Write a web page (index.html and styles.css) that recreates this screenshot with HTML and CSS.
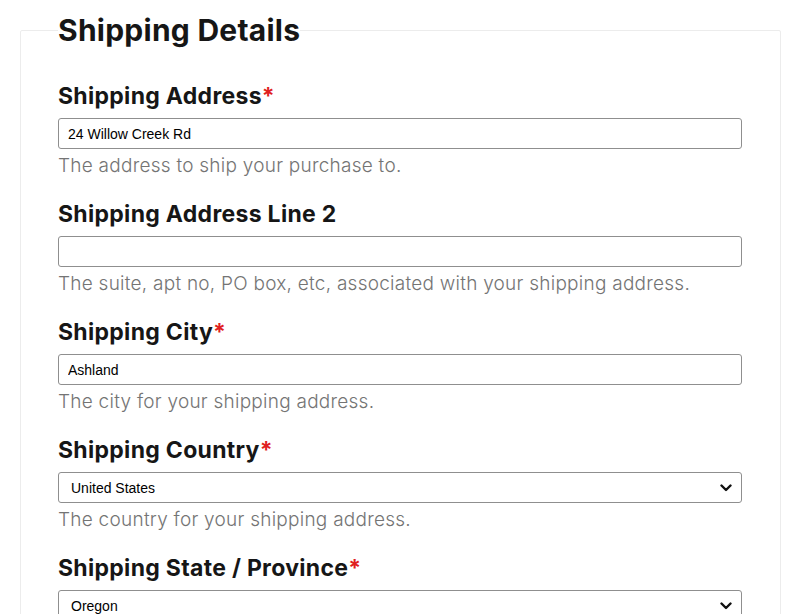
FILE: index.html
```html
<!DOCTYPE html>
<html>
<head>
<meta charset="utf-8">
<link rel="stylesheet" href="styles.css">
</head>
<body>
<div class="page">
  <fieldset class="card">
    <legend class="card-title">Shipping Details</legend>
    <div class="field field-first">
      <label class="label">Shipping Address<span class="req">*</span></label>
      <input class="input" type="text" value="24 Willow Creek Rd">
      <div class="help">The address to ship your purchase to.</div>
    </div>
    <div class="field">
      <label class="label">Shipping Address Line 2</label>
      <input class="input" type="text" value="">
      <div class="help">The suite, apt no, PO box, etc, associated with your shipping address.</div>
    </div>
    <div class="field">
      <label class="label">Shipping City<span class="req">*</span></label>
      <input class="input" type="text" value="Ashland">
      <div class="help">The city for your shipping address.</div>
    </div>
    <div class="field">
      <label class="label">Shipping Country<span class="req">*</span></label>
      <div class="select">
        <span class="select-value">United States</span>
        <svg class="chev" width="12" height="8" viewBox="0 0 12 8"><path d="M1.5 1.5 L6 6 L10.5 1.5" fill="none" stroke="#111" stroke-width="2.4" stroke-linecap="round" stroke-linejoin="round"/></svg>
      </div>
      <div class="help">The country for your shipping address.</div>
    </div>
    <div class="field">
      <label class="label">Shipping State / Province<span class="req">*</span></label>
      <div class="select">
        <span class="select-value">Oregon</span>
        <svg class="chev" width="12" height="8" viewBox="0 0 12 8"><path d="M1.5 1.5 L6 6 L10.5 1.5" fill="none" stroke="#111" stroke-width="2.4" stroke-linecap="round" stroke-linejoin="round"/></svg>
      </div>
    </div>
  </fieldset>
</div>
</body>
</html>
```

FILE: styles.css
```css
html, body {
  margin: 0;
  padding: 0;
  background: #fff;
  overflow: hidden;
}
.page {
  padding: 0 19px 0 20px;
  font-family: Inter, "Noto Sans", sans-serif;
  color: #161616;
}
.card {
  margin: 12px 0 0;
  border: 1px solid #ececec;
  border-radius: 2px;
  padding: 0 38px 20px 37px;
  min-width: 0;
}
.card-title {
  padding: 0;
  margin: 0;
  font-size: 30px;
  font-weight: 700;
  line-height: 36px;
  letter-spacing: 0.25px;
}
.field {
  display: flex;
  flex-direction: column;
}
.label {
  font-size: 23px;
  font-weight: 700;
  line-height: 28px;
  margin-top: 21px;
  letter-spacing: 0.3px;
}
.field-first .label {
  margin-top: 34px;
}
.req {
  color: #e02020;
}
.input {
  margin: 8px 0 0;
  height: 31px;
  box-sizing: border-box;
  border: 1px solid #8f8f8f;
  border-radius: 3px;
  padding: 0 9px;
  font-family: "Liberation Sans", Arial, sans-serif;
  font-size: 14px;
  color: #000;
  outline: none;
}
.select {
  margin-top: 8px;
  height: 31px;
  box-sizing: border-box;
  border: 1px solid #8f8f8f;
  border-radius: 3px;
  padding: 0 9px 0 12px;
  display: flex;
  align-items: center;
  justify-content: space-between;
  font-family: "Liberation Sans", Arial, sans-serif;
  font-size: 14px;
  color: #000;
}
.help {
  font-size: 19px;
  line-height: 26px;
  color: #747474;
  font-weight: 300;
  margin-top: 4px;
  letter-spacing: 0.25px;
}
```
